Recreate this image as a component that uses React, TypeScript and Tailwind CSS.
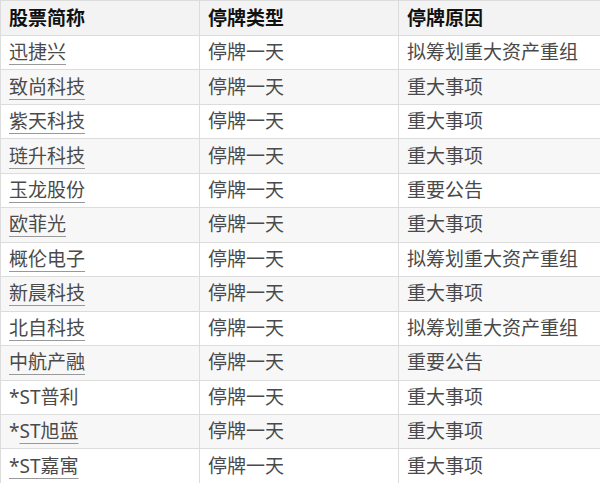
import React from "react";

type Row = { name: string; prefix?: string; link: boolean; type: string; reason: string };

const rows: Row[] = [
  { name: "迅捷兴", link: true, type: "停牌一天", reason: "拟筹划重大资产重组" },
  { name: "致尚科技", link: true, type: "停牌一天", reason: "重大事项" },
  { name: "紫天科技", link: true, type: "停牌一天", reason: "重大事项" },
  { name: "琏升科技", link: true, type: "停牌一天", reason: "重大事项" },
  { name: "玉龙股份", link: true, type: "停牌一天", reason: "重要公告" },
  { name: "欧菲光", link: true, type: "停牌一天", reason: "重大事项" },
  { name: "概伦电子", link: true, type: "停牌一天", reason: "拟筹划重大资产重组" },
  { name: "新晨科技", link: true, type: "停牌一天", reason: "重大事项" },
  { name: "北自科技", link: true, type: "停牌一天", reason: "拟筹划重大资产重组" },
  { name: "中航产融", link: true, type: "停牌一天", reason: "重要公告" },
  { name: "*ST普利", link: false, type: "停牌一天", reason: "重大事项" },
  { name: "ST旭蓝", prefix: "*", link: true, type: "停牌一天", reason: "重大事项" },
  { name: "*ST嘉寓", link: true, type: "停牌一天", reason: "重大事项" },
];

export default function App() {
  return (
    <div className="w-[600px] h-[483px] overflow-hidden bg-white font-['Noto_Sans','Noto_Sans_CJK_SC',sans-serif] text-[19px] text-[#4a4a4a]">
      <table className="w-[600px] table-fixed border-collapse">
        <colgroup>
          <col className="w-[199px]" />
          <col className="w-[199px]" />
          <col className="w-[202px]" />
        </colgroup>
        <thead>
          <tr className="h-[35px] bg-[#f3f3f3] text-[#111] font-bold">
            <th className="border border-[#dcdcdc] px-2 text-left align-middle">股票简称</th>
            <th className="border border-[#dcdcdc] px-2 text-left align-middle">停牌类型</th>
            <th className="border border-[#dcdcdc] px-2 text-left align-middle">停牌原因</th>
          </tr>
        </thead>
        <tbody>
          {rows.map((r, i) => (
            <tr key={i} className={`h-[34.46px] ${i % 2 === 1 ? "bg-[#f7f7f7]" : "bg-white"}`}>
              <td className="border border-[#dcdcdc] px-2 align-middle leading-none">
                {r.prefix}
                {r.link ? (
                  <span className="underline decoration-[#999] underline-offset-[5px] decoration-1">{r.name}</span>
                ) : (
                  r.name
                )}
              </td>
              <td className="border border-[#dcdcdc] px-2 align-middle leading-none">{r.type}</td>
              <td className="border border-[#dcdcdc] px-2 align-middle leading-none">{r.reason}</td>
            </tr>
          ))}
        </tbody>
      </table>
    </div>
  );
}
